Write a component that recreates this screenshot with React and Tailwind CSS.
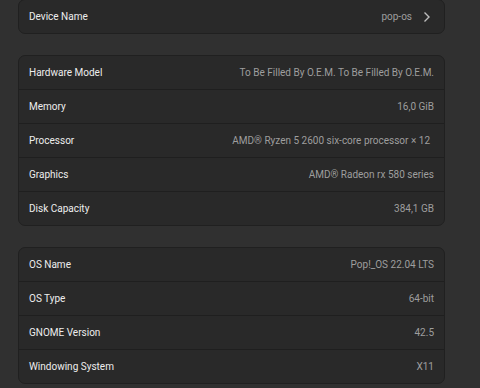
const groups = [
  [{ label: 'Device Name', value: 'pop-os', link: true }],
  [
    { label: 'Hardware Model', value: 'To Be Filled By O.E.M. To Be Filled By O.E.M.' },
    { label: 'Memory', value: '16,0 GiB' },
    { label: 'Processor', value: 'AMD® Ryzen 5 2600 six-core processor × 12', inset: true },
    { label: 'Graphics', value: 'AMD® Radeon rx 580 series' },
    { label: 'Disk Capacity', value: '384,1 GB' },
  ],
  [
    { label: 'OS Name', value: 'Pop!_OS 22.04 LTS' },
    { label: 'OS Type', value: '64-bit' },
    { label: 'GNOME Version', value: '42.5' },
    { label: 'Windowing System', value: 'X11' },
  ],
];

function Chevron() {
  return (
    <svg width="8" height="12" viewBox="0 0 8 12" className="ml-[11px] mr-[3px]">
      <path d="M1.5 1.5 L6 6 L1.5 10.5" fill="none" stroke="#bdbdbd" strokeWidth="1.4" />
    </svg>
  );
}

function Row({ label, value, link, inset, first }) {
  return (
    <div className={`flex items-center justify-between pl-[10px] pr-[10px] ${first ? 'h-[33px]' : 'h-[34px] border-t border-[#1f1f1f]'}`}>
      <span className="text-[#ededed]">{label}</span>
      <span className={`flex items-center text-[#9e9e9e] ${inset ? 'mr-[4px]' : ''}`}>
        {value}
        {link && <Chevron />}
      </span>
    </div>
  );
}

export default function App() {
  return (
    <div
      className="h-[388px] w-[480px] overflow-hidden bg-[#303030] pl-[18px] pr-[35px] text-[10px]"
      style={{ fontFamily: 'Roboto, "Noto Sans", sans-serif' }}
    >
      <div className="-mt-px flex flex-col gap-[21px]">
        {groups.map((rows, i) => (
          <div key={i} className="rounded-[7px] border border-[#202020] bg-[#292929]">
            {rows.map((r, j) => <Row key={r.label} first={j === 0} {...r} />)}
          </div>
        ))}
      </div>
    </div>
  );
}
